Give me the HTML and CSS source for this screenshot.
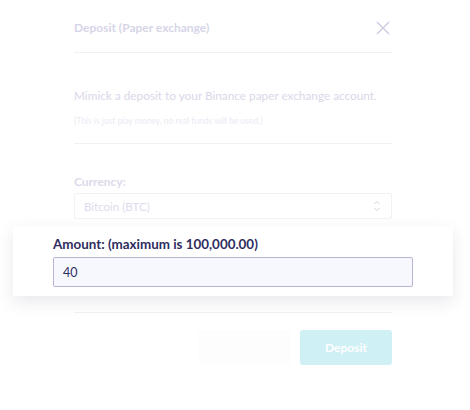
FILE: index.html
```html
<!DOCTYPE html>
<html>
<head>
<meta charset="utf-8">
<link rel="stylesheet" href="styles.css">
</head>
<body>
<div class="modal">
  <div class="header faded">
    <div class="title">Deposit (Paper exchange)</div>
    <svg class="close" width="14" height="14" viewBox="0 0 14 14"><path d="M1 1L13 13M13 1L1 13" stroke="#cfcde0" stroke-width="1.5" fill="none"/></svg>
  </div>
  <div class="intro faded">
    <p class="lead">Mimick a deposit to your Binance paper exchange account.</p>
    <p class="note">(This is just play money, no real funds will be used.)</p>
  </div>
  <div class="field faded">
    <div class="label">Currency:</div>
    <div class="select">
      <span>Bitcoin (BTC)</span>
      <svg width="8" height="14" viewBox="0 0 8 14"><path d="M1.5 5L4 2.5L6.5 5M1.5 9L4 11.5L6.5 9" stroke="#d3d2e2" stroke-width="1" fill="none"/></svg>
    </div>
  </div>
  <div class="spotlight">
    <div class="amount-label">Amount: (maximum is 100,000.00)</div>
    <div class="input">40</div>
  </div>
  <div class="footer">
    <div class="btn cancel"></div>
    <div class="btn deposit">Deposit</div>
  </div>
</div>
</body>
</html>
```

FILE: styles.css
```css
html, body {
  margin: 0;
  padding: 0;
  background: #ffffff;
}
body {
  font-family: "Lato", "Open Sans", sans-serif;
  width: 470px;
  height: 410px;
  overflow: hidden;
}
.modal {
  width: 318px;
  margin-left: 74px;
  display: flex;
  flex-direction: column;
}
.header {
  display: flex;
  justify-content: space-between;
  align-items: center;
  padding: 18px 0 14px;
  border-bottom: 1px solid #f1f0f5;
}
.title {
  font-size: 12px;
  font-weight: 700;
  line-height: 20px;
  color: #d7d5e8;
}
.close {
  margin-right: 2px;
}
.intro {
  padding: 33px 0 15px;
  border-bottom: 1px solid #f1f0f5;
}
.intro p {
  margin: 0;
}
.lead {
  font-size: 11.8px;
  line-height: 20px;
  color: #d9d7e9;
  white-space: nowrap;
}
.note {
  margin-top: 8px !important;
  font-size: 8.5px;
  line-height: 14px;
  color: #ebeaf3;
}
.field {
  padding-top: 29px;
}
.label {
  font-size: 12px;
  font-weight: 700;
  line-height: 18px;
  color: #dcdaea;
}
.select {
  margin-top: 2px;
  height: 24px;
  border: 1px solid #f2f1f6;
  border-radius: 2px;
  display: flex;
  align-items: center;
  justify-content: space-between;
  padding: 0 10px 0 9px;
  font-size: 11.5px;
  color: #dedced;
}
.spotlight {
  margin: 7px -61px 0;
  padding: 9px 40px 9px;
  background: #ffffff;
  box-shadow: 0 6px 16px rgba(40, 40, 90, 0.1);
  position: relative;
  z-index: 1;
}
.amount-label {
  font-size: 13.4px;
  font-weight: 700;
  line-height: 18px;
  color: #2f2d5f;
}
.input {
  margin-top: 4px;
  height: 28px;
  border: 1px solid #b7b4d7;
  border-radius: 2px;
  background: #f7f8fe;
  display: flex;
  align-items: center;
  padding-left: 9px;
  font-size: 12.5px;
  color: #2f2d5f;
}
.footer {
  margin-top: 16px;
  border-top: 1px solid #f2f2f5;
  padding-top: 17px;
  display: flex;
  justify-content: flex-end;
  gap: 9px;
}
.btn {
  height: 35px;
  width: 93px;
  border-radius: 3px;
  display: flex;
  align-items: center;
  justify-content: center;
  font-size: 12px;
  font-weight: 700;
}
.cancel {
  background: #fdfdfd;
}
.deposit {
  width: 92px;
  background: #cff0f4;
  color: #ffffff;
}
```
